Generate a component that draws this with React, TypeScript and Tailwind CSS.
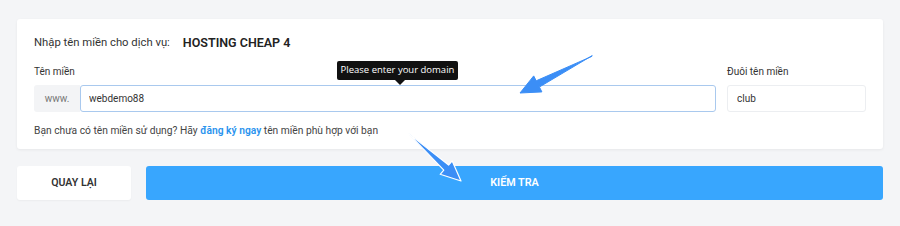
import React from 'react';

const font = { fontFamily: 'Roboto, "Noto Sans", sans-serif' };

// tapered pointer arrows drawn over the form (annotation layer)
const Arrows: React.FC = () => (
  <svg className="pointer-events-none absolute left-0 top-0" width="900" height="226" viewBox="0 0 900 226">
    <polygon
      points="592.2,55.6 539.4,87.0 541.9,91.9 520,93 533.7,75.9 536.2,80.8 591.8,56.4"
      fill="#3b8ef6"
      stroke="#3b8ef6"
      strokeWidth="1"
      strokeLinejoin="round"
    />
    <polygon
      points="409.3,134.4 443.8,170.2 440.2,174.3 461,181 452.2,160.9 448.6,165.0 408.7,133.6"
      fill="#3b8ef6"
      stroke="#ffffff"
      strokeWidth="1.2"
      strokeLinejoin="round"
    />
  </svg>
);

export default function App() {
  const [domain, setDomain] = React.useState('webdemo88');
  const [ext, setExt] = React.useState('club');

  return (
    <div className="relative h-[226px] w-[900px] bg-[#f4f5f7] pt-[19px]" style={font}>
      <div className="relative mx-[17px] h-[130px] rounded-[3px] bg-white px-[17px] pt-[15px] shadow-[0_1px_3px_rgba(0,0,0,0.06)]">
        <div className="flex h-[18px] items-center">
          <span className="text-[11.3px] text-[#333]">Nhập tên miền cho dịch vụ:</span>
          <span className="ml-[13px] text-[12.5px] font-semibold text-[#222]">HOSTING CHEAP 4</span>
        </div>

        <div className="mt-[11px] flex gap-[11px]">
          <div className="flex-1">
            <div className="mb-[4px] h-[18px] text-[10px] leading-[18px] text-[#333]">Tên miền</div>
            <div className="flex h-[27px]">
              <div className="flex w-[46px] items-center justify-center rounded-l-[3px] bg-[#f3f4f6] text-[10px] text-[#777]">www.</div>
              <input
                value={domain}
                onChange={(e) => setDomain(e.target.value)}
                className="h-[27px] flex-1 rounded-[3px] border border-[#a9c9ee] bg-white px-[8px] text-[10px] text-[#333] outline-none"
                style={font}
              />
            </div>
          </div>
          <div className="w-[139px]">
            <div className="mb-[4px] h-[18px] text-[10px] leading-[18px] text-[#333]">Đuôi tên miền</div>
            <input
              value={ext}
              onChange={(e) => setExt(e.target.value)}
              className="h-[27px] w-full rounded-[3px] border border-[#eceef1] bg-white px-[9px] text-[10px] text-[#333] outline-none"
              style={font}
            />
          </div>
        </div>

        <div className="mt-[10px] h-[18px] text-[10.25px] leading-[18px] text-[#444]">
          Bạn chưa có tên miền sử dụng? Hãy <a className="font-semibold text-[#2a93ee]">đăng ký ngay</a> tên miền phù hợp với bạn
        </div>

        {/* tooltip */}
        <div className="absolute left-[320px] top-[42px]">
          <div
            className="flex h-[19px] w-[121px] items-center justify-center whitespace-nowrap rounded-[2px] bg-[#111] text-[9.5px] text-white"
            style={{ fontFamily: '"Open Sans", "DejaVu Sans", sans-serif' }}
          >
            Please enter your domain
          </div>
          <div className="ml-[58px] h-0 w-0 border-x-[5px] border-t-[5px] border-x-transparent border-t-[#111]" />
        </div>
      </div>

      <div className="mx-[17px] mt-[17px] flex gap-[15px]">
        <button type="button" className="h-[34px] w-[114px] rounded-[3px] bg-white text-[10.6px] font-semibold text-[#333] shadow-[0_1px_2px_rgba(0,0,0,0.04)]">
          QUAY LẠI
        </button>
        <button type="button" className="h-[34px] flex-1 rounded-[3px] bg-[#38a6fe] text-[10.8px] font-semibold text-white">
          KIỂM TRA
        </button>
      </div>

      <Arrows />
    </div>
  );
}
